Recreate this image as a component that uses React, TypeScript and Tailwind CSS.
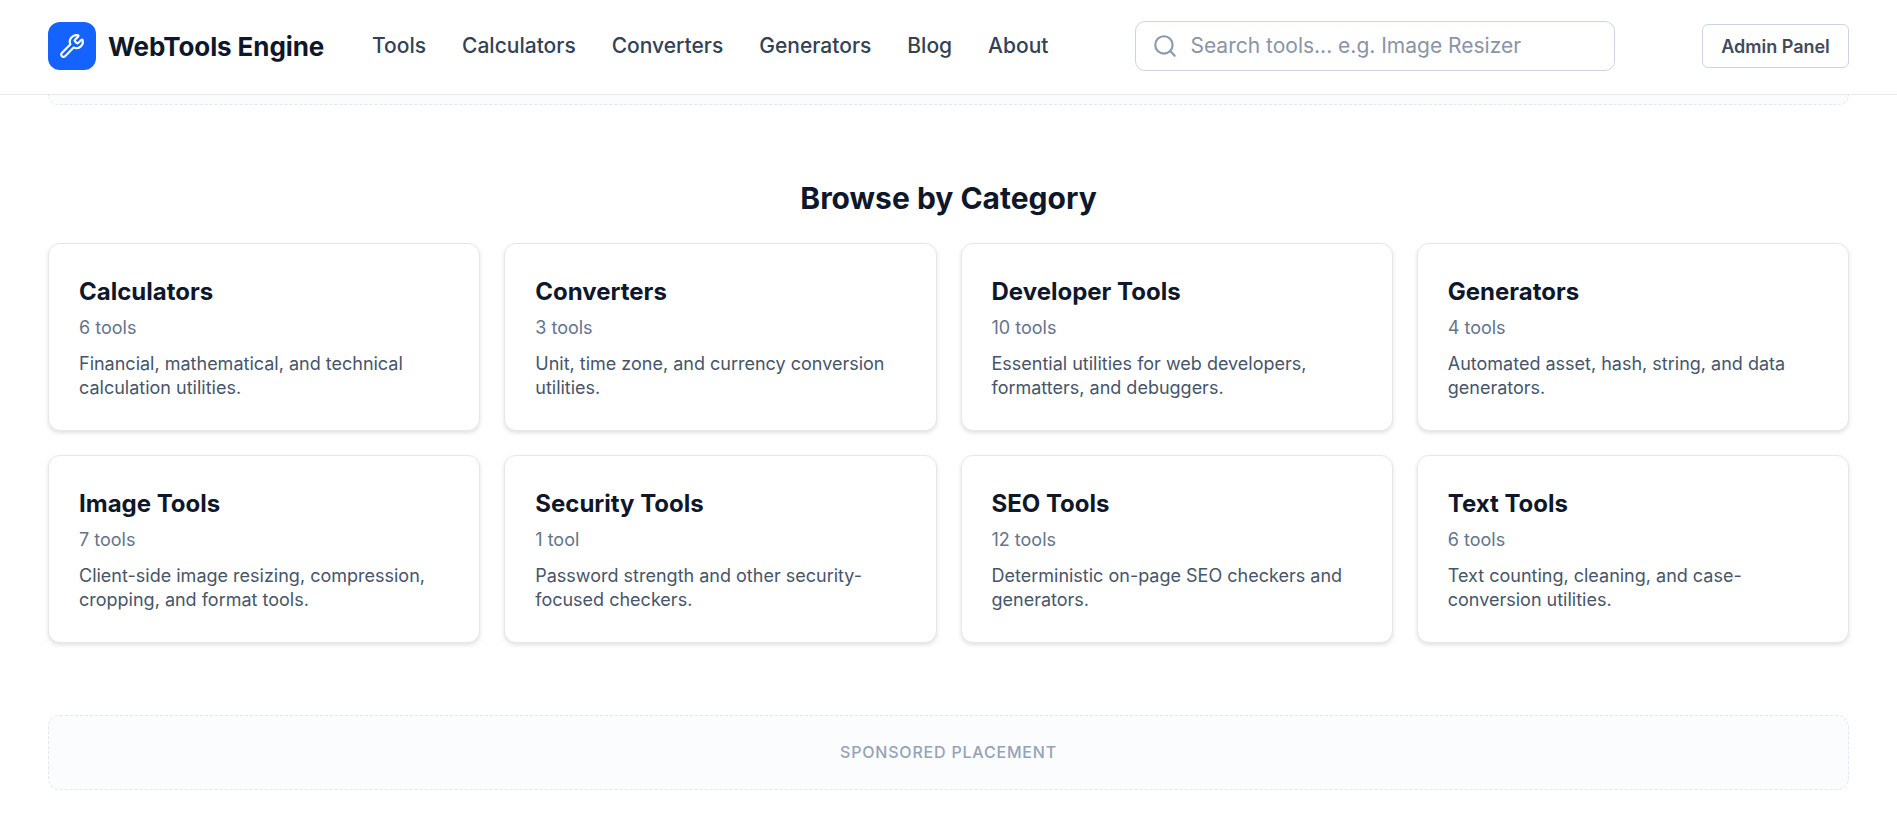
import { Search, Wrench } from "lucide-react";

const cats = [
  ["Calculators", "6 tools", "Financial, mathematical, and technical calculation utilities."],
  ["Converters", "3 tools", "Unit, time zone, and currency conversion utilities."],
  ["Developer Tools", "10 tools", "Essential utilities for web developers, formatters, and debuggers."],
  ["Generators", "4 tools", "Automated asset, hash, string, and data generators."],
  ["Image Tools", "7 tools", "Client-side image resizing, compression, cropping, and format tools."],
  ["Security Tools", "1 tool", "Password strength and other security-focused checkers."],
  ["SEO Tools", "12 tools", "Deterministic on-page SEO checkers and generators."],
  ["Text Tools", "6 tools", "Text counting, cleaning, and case-conversion utilities."],
];
const nav = ["Tools", "Calculators", "Converters", "Generators", "Blog", "About"];

export default function App() {
  return (
    <div className="h-[814px] overflow-hidden bg-white font-['Inter',sans-serif]">
      <header className="flex h-[95px] items-center border-b border-[#e5e7eb] bg-white px-12 pb-[2px]">
        <div className="flex w-[324px] items-center gap-3">
          <div className="flex h-12 w-12 items-center justify-center rounded-xl bg-[#1463ff] text-white">
            <Wrench size={26} strokeWidth={2} />
          </div>
          <span className="text-[26px] font-bold tracking-[-0.1px] text-[#0f172a]">WebTools Engine</span>
        </div>
        <nav className="flex items-center gap-9 text-[21px] font-medium text-[#334155]">
          {nav.map((n) => <span key={n}>{n}</span>)}
        </nav>
        <div className="ml-[87px] flex h-[50px] w-[480px] items-center gap-3 rounded-[10px] border border-[#cbd5e1] px-4 text-[21px]">
          <Search size={26} className="text-[#8a9ab5]" />
          <span className="text-[#8a94a6]">Search tools... e.g. Image Resizer</span>
        </div>
        <button className="ml-auto h-11 w-[147px] rounded-md border border-[#cbd5e1] text-[18px] font-semibold text-[#3f4a5c]">Admin Panel</button>
      </header>
      <main className="px-12">
        <div className="h-[10px] rounded-b-xl border border-t-0 border-dashed border-[#e5e7eb] bg-[#fbfcfd]"></div>
        <h2 className="mt-[71px] mb-[23px] text-center text-[30px] leading-[44px] font-bold text-[#0f172a]">Browse by Category</h2>
        <div className="grid grid-cols-4 gap-6">
          {cats.map(([t, c, d]) => (
            <div key={t} className="h-[188px] rounded-xl border border-[#e5e7eb] bg-white px-[30px] pt-8 shadow-[0_2px_4px_rgba(0,0,0,0.12)]">
              <div className="text-[24px] leading-8 font-bold text-[#0f172a]">{t}</div>
              <div className="mt-2 text-[18px] leading-6 text-[#64748b]">{c}</div>
              <div className="mt-3 text-[18px] leading-6 text-[#475569]">{d}</div>
            </div>
          ))}
        </div>
        <div className="mt-[72px] flex h-[75px] items-center justify-center rounded-xl border border-dashed border-[#e5e7eb] bg-[#fbfcfd] pb-[2px] text-[16px] font-medium tracking-[0.8px] text-[#94a3b8]">SPONSORED PLACEMENT</div>
      </main>
    </div>
  );
}
